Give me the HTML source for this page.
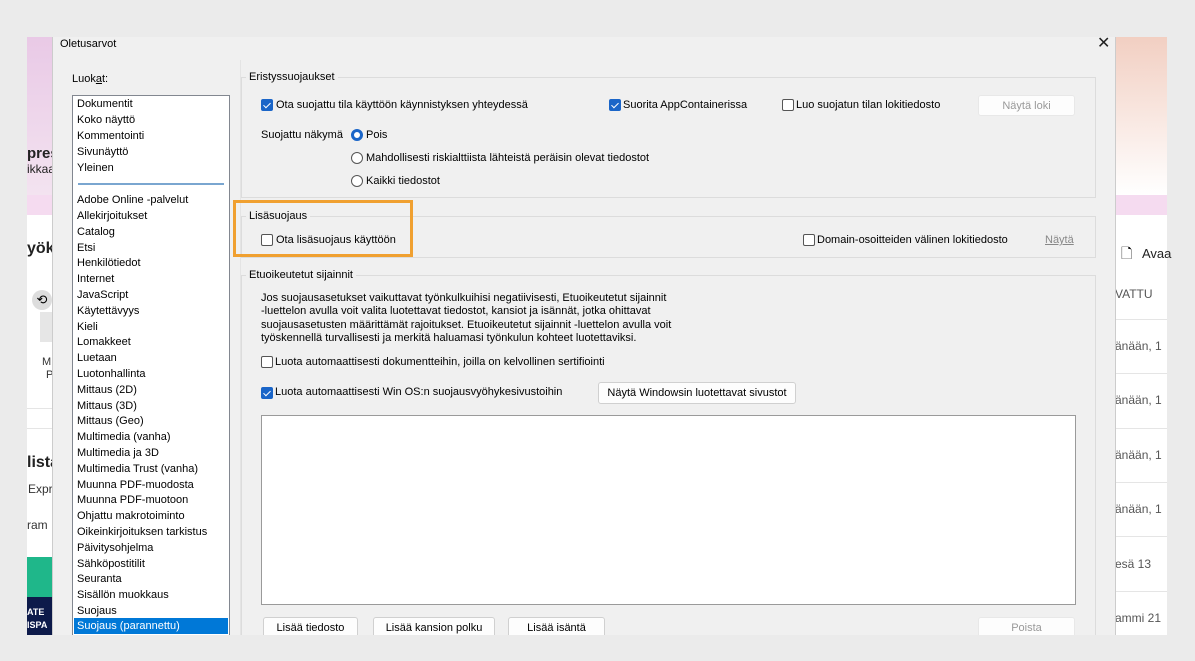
<!DOCTYPE html>
<html><head><meta charset="utf-8"><style>
*{margin:0;padding:0;box-sizing:border-box}
body{width:1195px;height:661px;background:#ebebeb;position:relative;overflow:hidden;font-family:"Liberation Sans",sans-serif;font-size:11px;color:#000}
.a{position:absolute;white-space:nowrap}
.cb{position:absolute;width:12px;height:12px;border:1px solid #555;border-radius:2px;background:#fff}
.cb.on{background:#1a65c8;border-color:#1a65c8}
.cb.on:after{content:"";position:absolute;left:3px;top:1px;width:3px;height:6px;border:solid #fff;border-width:0 1.5px 1.5px 0;transform:rotate(45deg)}
.rb{position:absolute;width:12px;height:12px;border:1px solid #555;border-radius:50%;background:#fff}
.rb.on{border:3.5px solid #1a65c8}
.grp{position:absolute;border:1px solid #dcdcdc}
.gt{position:absolute;background:#f0f0f0;padding:0 3px;color:#000}
.btn{position:absolute;background:#fdfdfd;border:1px solid #d0d0d0;border-radius:3px;text-align:center;line-height:20px}
.li{position:absolute;left:4px;height:16px;line-height:16px}
</style></head><body>
<!-- background app -->
<div class="a" style="left:27px;top:37px;width:1140px;height:598px;background:#fff"></div>
<div class="a" style="left:27px;top:37px;width:30px;height:158px;background:linear-gradient(#e9c9e6,#f3e3f0)"></div>
<div class="a" style="left:1115px;top:37px;width:52px;height:158px;background:linear-gradient(#f2cfc2,#fff)"></div>
<div class="a" style="left:27px;top:195px;width:1140px;height:20px;background:#f5dbf0"></div>
<div class="a" style="left:27px;top:145px;font-size:15px;font-weight:bold;color:#222">pres</div>
<div class="a" style="left:27px;top:162px;font-size:12px;color:#222">ikkaa</div>
<div class="a" style="left:27px;top:240px;font-size:16px;font-weight:bold;color:#222">yök</div>
<div class="a" style="left:32px;top:290px;width:20px;height:20px;border-radius:50%;background:#ddd;font-size:13px;text-align:center;line-height:20px">⟲</div>
<div class="a" style="left:40px;top:312px;width:12px;height:30px;background:#e6e6e6"></div>
<div class="a" style="left:42px;top:356px;color:#333">M</div>
<div class="a" style="left:46px;top:369px;color:#333">P</div>
<div class="a" style="left:27px;top:408px;width:30px;height:1px;background:#e5e5e5"></div>
<div class="a" style="left:27px;top:428px;width:30px;height:1px;background:#e5e5e5"></div>
<div class="a" style="left:27px;top:454px;font-size:16px;font-weight:bold;color:#222">lista</div>
<div class="a" style="left:28px;top:482px;font-size:12px;color:#333">Expr</div>
<div class="a" style="left:27px;top:518px;font-size:12px;color:#333">ram</div>
<div class="a" style="left:27px;top:557px;width:25px;height:78px;background:#0d1a4a"></div>
<div class="a" style="left:27px;top:557px;width:25px;height:40px;background:#1fb78a"></div>
<div class="a" style="left:27px;top:607px;font-size:9px;font-weight:bold;color:#fff">ATE</div>
<div class="a" style="left:27px;top:620px;font-size:9px;font-weight:bold;color:#fff">ISPA</div>
<div class="a" style="left:1121px;top:243px;font-size:14px">🗋</div>
<div class="a" style="left:1142px;top:246px;font-size:13px;color:#222">Avaa</div>
<div class="a" style="left:1115px;top:287px;font-size:12px;color:#555">VATTU</div>
<div class="a" style="left:1115px;top:319px;width:52px;height:1px;background:#e5e5e5"></div>
<div class="a" style="left:1115px;top:339px;font-size:12px;color:#555">änään, 1</div>
<div class="a" style="left:1115px;top:373px;width:52px;height:1px;background:#e5e5e5"></div>
<div class="a" style="left:1115px;top:393px;font-size:12px;color:#555">änään, 1</div>
<div class="a" style="left:1115px;top:428px;width:52px;height:1px;background:#e5e5e5"></div>
<div class="a" style="left:1115px;top:448px;font-size:12px;color:#555">änään, 1</div>
<div class="a" style="left:1115px;top:482px;width:52px;height:1px;background:#e5e5e5"></div>
<div class="a" style="left:1115px;top:502px;font-size:12px;color:#555">änään, 1</div>
<div class="a" style="left:1115px;top:536px;width:52px;height:1px;background:#e5e5e5"></div>
<div class="a" style="left:1115px;top:557px;font-size:12px;color:#555">esä 13</div>
<div class="a" style="left:1115px;top:591px;width:52px;height:1px;background:#e5e5e5"></div>
<div class="a" style="left:1115px;top:611px;font-size:12px;color:#555">ammi 21</div>

<!-- dialog -->
<div class="a" style="left:52px;top:37px;width:1064px;height:598px;background:#f0f0f0;border-left:1px solid #ccc;border-right:1px solid #ccc"></div>
<div class="a" style="left:60px;top:38px">Oletusarvot</div>
<div class="a" style="left:1097px;top:33px;font-size:16px;color:#222">✕</div>
<div class="a" style="left:72px;top:73px">Luok<u>a</u>t:</div>
<div class="a" style="left:72px;top:95px;width:158px;height:545px;background:#fff;border:1px solid #828790">
<div class="li" style="top:0">Dokumentit</div>
<div class="li" style="top:16px">Koko näyttö</div>
<div class="li" style="top:32px">Kommentointi</div>
<div class="li" style="top:48px">Sivunäyttö</div>
<div class="li" style="top:64px">Yleinen</div>
<div class="a" style="left:5px;top:87px;width:146px;height:2px;background:#7aa6d0"></div>
<div class="li" style="top:96px">Adobe Online -palvelut</div>
<div class="li" style="top:112px">Allekirjoitukset</div>
<div class="li" style="top:128px">Catalog</div>
<div class="li" style="top:144px">Etsi</div>
<div class="li" style="top:159px">Henkilötiedot</div>
<div class="li" style="top:175px">Internet</div>
<div class="li" style="top:191px">JavaScript</div>
<div class="li" style="top:207px">Käytettävyys</div>
<div class="li" style="top:223px">Kieli</div>
<div class="li" style="top:238px">Lomakkeet</div>
<div class="li" style="top:254px">Luetaan</div>
<div class="li" style="top:270px">Luotonhallinta</div>
<div class="li" style="top:286px">Mittaus (2D)</div>
<div class="li" style="top:302px">Mittaus (3D)</div>
<div class="li" style="top:317px">Mittaus (Geo)</div>
<div class="li" style="top:333px">Multimedia (vanha)</div>
<div class="li" style="top:349px">Multimedia ja 3D</div>
<div class="li" style="top:365px">Multimedia Trust (vanha)</div>
<div class="li" style="top:381px">Muunna PDF-muodosta</div>
<div class="li" style="top:396px">Muunna PDF-muotoon</div>
<div class="li" style="top:412px">Ohjattu makrotoiminto</div>
<div class="li" style="top:428px">Oikeinkirjoituksen tarkistus</div>
<div class="li" style="top:444px">Päivitysohjelma</div>
<div class="li" style="top:460px">Sähköpostitilit</div>
<div class="li" style="top:475px">Seuranta</div>
<div class="li" style="top:491px">Sisällön muokkaus</div>
<div class="li" style="top:507px">Suojaus</div>
<div class="li" style="top:522px;left:1px;width:154px;padding-left:3px;background:#0078d7;color:#fff">Suojaus (parannettu)</div>
</div>
<div class="a" style="left:240px;top:60px;width:1px;height:575px;background:#e4e4e4"></div>

<!-- group 1 -->
<div class="grp" style="left:241px;top:77px;width:855px;height:121px"></div>
<div class="gt" style="left:246px;top:71px">Eristyssuojaukset</div>
<div class="cb on" style="left:261px;top:99px"></div><div class="a" style="left:276px;top:99px">Ota suojattu tila käyttöön käynnistyksen yhteydessä</div>
<div class="cb on" style="left:609px;top:99px"></div><div class="a" style="left:623px;top:99px">Suorita AppContainerissa</div>
<div class="cb" style="left:782px;top:99px"></div><div class="a" style="left:796px;top:99px">Luo suojatun tilan lokitiedosto</div>
<div class="btn" style="left:978px;top:95px;width:97px;height:21px;color:#999;border-color:#e8e8e8">Näytä loki</div>
<div class="a" style="left:261px;top:129px">Suojattu näkymä</div>
<div class="rb on" style="left:351px;top:129px"></div><div class="a" style="left:366px;top:129px">Pois</div>
<div class="rb" style="left:351px;top:152px"></div><div class="a" style="left:366px;top:152px">Mahdollisesti riskialttiista lähteistä peräisin olevat tiedostot</div>
<div class="rb" style="left:351px;top:175px"></div><div class="a" style="left:366px;top:175px">Kaikki tiedostot</div>

<!-- group 2 -->
<div class="grp" style="left:241px;top:216px;width:855px;height:42px"></div>
<div class="gt" style="left:246px;top:210px">Lisäsuojaus</div>
<div class="cb" style="left:261px;top:234px"></div><div class="a" style="left:276px;top:234px">Ota lisäsuojaus käyttöön</div>
<div class="cb" style="left:803px;top:234px"></div><div class="a" style="left:817px;top:234px">Domain-osoitteiden välinen lokitiedosto</div>
<div class="a" style="left:1045px;top:234px;color:#888;text-decoration:underline">Näytä</div>
<div class="a" style="left:233px;top:200px;width:180px;height:57px;border:3px solid #f0a030"></div>

<!-- group 3 -->
<div class="grp" style="left:241px;top:275px;width:855px;height:370px"></div>
<div class="gt" style="left:246px;top:269px">Etuoikeutetut sijainnit</div>
<div class="a" style="left:261px;top:292px;line-height:13.3px">Jos suojausasetukset vaikuttavat työnkulkuihisi negatiivisesti, Etuoikeutetut sijainnit<br>-luettelon avulla voit valita luotettavat tiedostot, kansiot ja isännät, jotka ohittavat<br>suojausasetusten määrittämät rajoitukset. Etuoikeutetut sijainnit -luettelon avulla voit<br>työskennellä turvallisesti ja merkitä haluamasi työnkulun kohteet luotettaviksi.</div>
<div class="cb" style="left:261px;top:356px"></div><div class="a" style="left:275px;top:356px">Luota automaattisesti dokumentteihin, joilla on kelvollinen sertifiointi</div>
<div class="cb on" style="left:261px;top:387px"></div><div class="a" style="left:275px;top:386px">Luota automaattisesti Win OS:n suojausvyöhykesivustoihin</div>
<div class="btn" style="left:598px;top:382px;width:198px;height:22px">Näytä Windowsin luotettavat sivustot</div>
<div class="a" style="left:261px;top:415px;width:815px;height:190px;background:#fff;border:1px solid #9a9a9a"></div>
<div class="btn" style="left:263px;top:617px;width:95px;height:22px">Lisää tiedosto</div>
<div class="btn" style="left:373px;top:617px;width:122px;height:22px">Lisää kansion polku</div>
<div class="btn" style="left:508px;top:617px;width:97px;height:22px">Lisää isäntä</div>
<div class="btn" style="left:978px;top:617px;width:97px;height:22px;color:#999;border-color:#e8e8e8">Poista</div>
<div class="a" style="left:0;top:635px;width:1195px;height:26px;background:#ebebeb"></div>
</body></html>
